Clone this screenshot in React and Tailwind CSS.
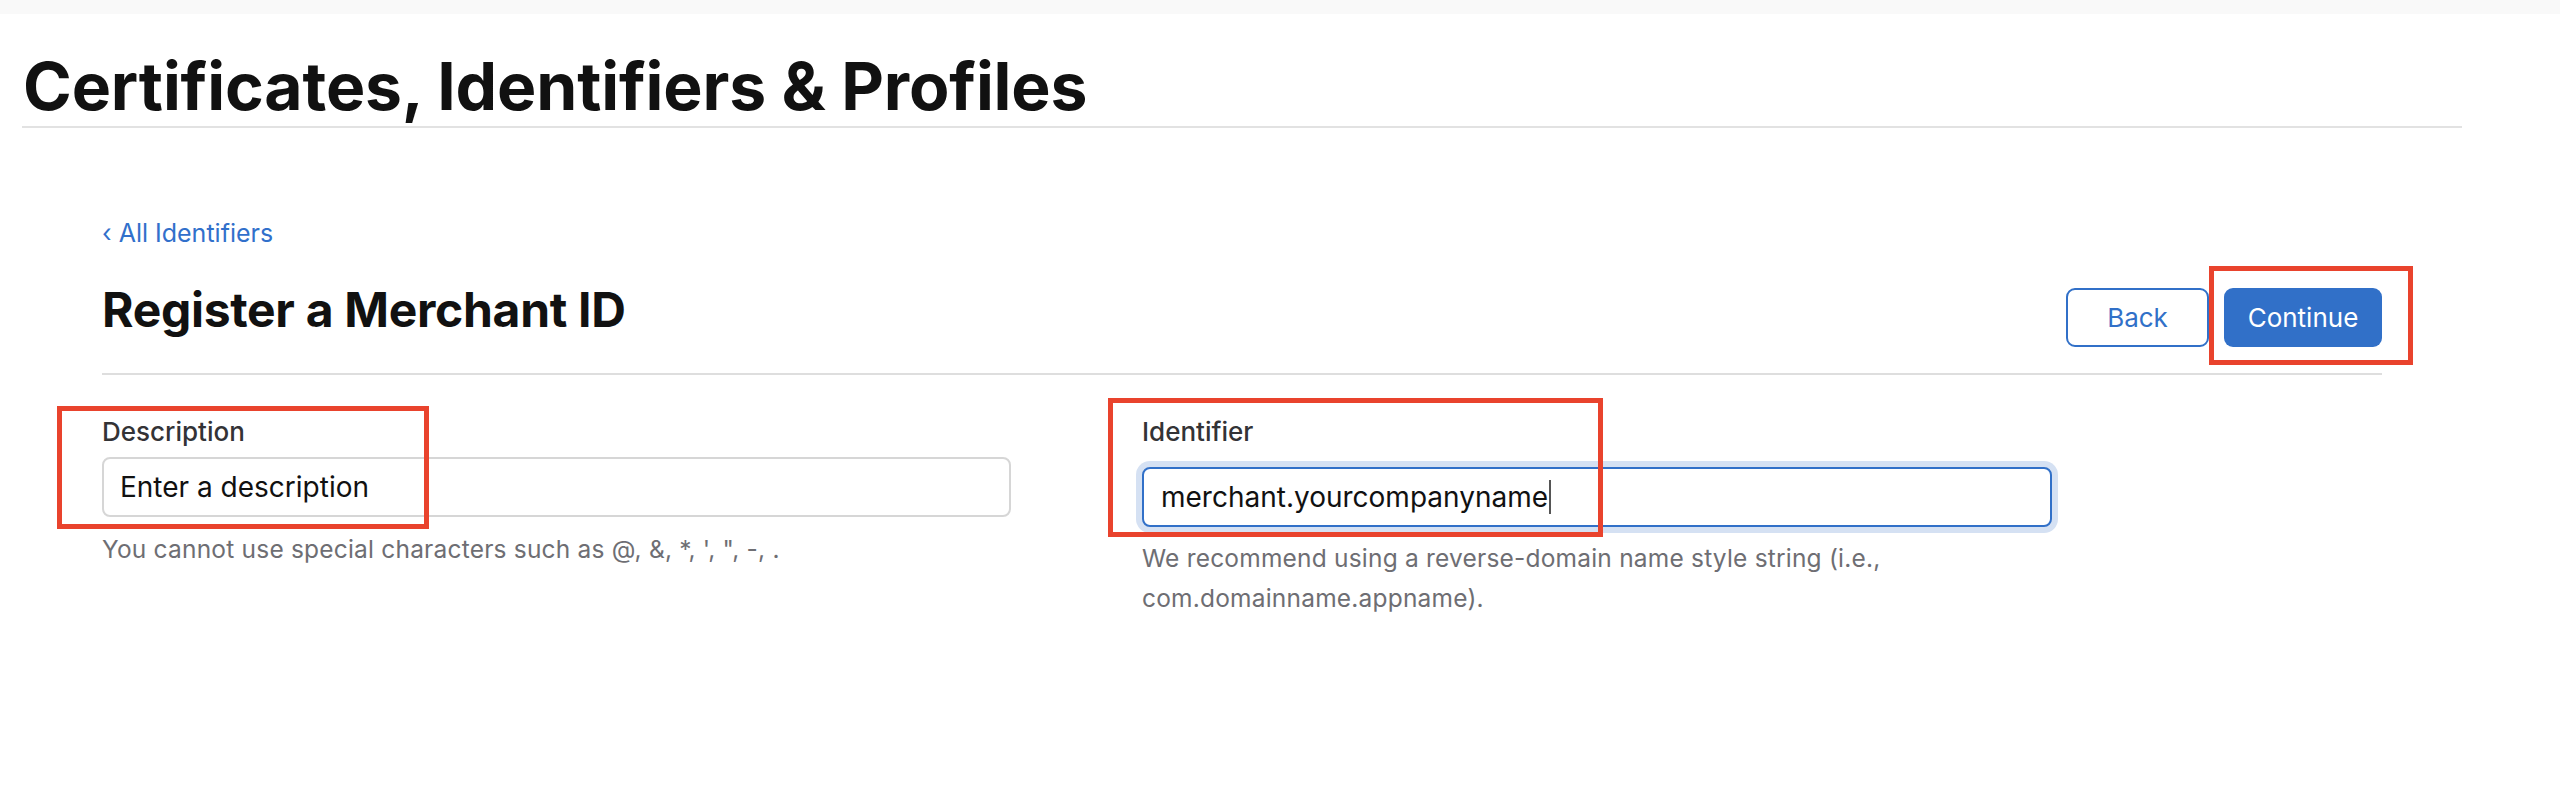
import React from "react";

function Field({ label, children, help, inputGap, helpGap, note }) {
    return (
        <div className="relative w-[910px]">
            <label className="block text-[26px] leading-[26px] font-medium text-[#333336]">{label}</label>
            <div className={inputGap}>{children}</div>
            <p className={`${helpGap} text-[24.5px] leading-[40px] tracking-[0.2px] text-[#6e6e73]`}>{help}</p>
            {note}
        </div>
    );
}

export default function App() {
    return (
        <div className="min-h-screen bg-white font-['Inter','Noto_Sans',sans-serif] text-[#111]">
            {/* top strip */}
            <div className="h-[14px] bg-[#f9f9f9]" />

            {/* page title */}
            <div className="ml-[22px] w-[2440px] border-b-2 border-[#e2e2e2] pt-[39px] pb-[7px]">
                <h1 className="text-[66px] leading-[66px] font-bold tracking-[-0.15px] pl-[1px]">
                    Certificates, Identifiers &amp; Profiles
                </h1>
            </div>

            <main className="mx-[102px] w-[2280px]">
                <a href="#" className="mt-[93px] block text-[25px] leading-[24px] text-[#3170cb]">
                    ‹ All Identifiers
                </a>

                {/* heading row */}
                <div className="mt-[41px] flex items-start justify-between border-b-2 border-[#dedede] pb-[26px]">
                    <h2 className="text-[48px] leading-[48px] font-bold tracking-[-0.3px]">Register a Merchant ID</h2>
                    <div className="mt-[2px] flex gap-[15px]">
                        <button
                            type="button"
                            className="h-[59px] w-[143px] rounded-[9px] border-2 border-[#3170c8] bg-white text-[26px] text-[#3170c8]"
                        >
                            Back
                        </button>
                        <div className="relative">
                            <button
                                type="button"
                                className="h-[59px] w-[158px] rounded-[9px] bg-[#3170c8] text-[26px] text-white"
                            >
                                Continue
                            </button>
                            <div className="pointer-events-none absolute -left-[15px] -top-[22px] h-[99px] w-[204px] border-[5px] border-[#e9432d]" />
                        </div>
                    </div>
                </div>

                {/* fields */}
                <div className="grid grid-cols-[1040px_910px] pt-[44px]">
                    <Field
                        label="Description"
                        inputGap="mt-[12px]"
                        helpGap="mt-[12px]"
                        help={`You cannot use special characters such as @, &, *, ', ", -, .`}
                        note={
                            <div className="pointer-events-none absolute -left-[45px] -top-[13px] h-[123px] w-[372px] border-[5px] border-[#e9432d]" />
                        }
                    >
                        <input
                            type="text"
                            placeholder="Enter a description"
                            className="h-[60px] w-[909px] rounded-[8px] border-2 border-[#d6d6d6] bg-white px-[16px] text-[28px] text-[#111] outline-none placeholder:text-[#111]"
                        />
                    </Field>

                    <Field
                        label="Identifier"
                        inputGap="mt-[22px]"
                        helpGap="mt-[11px]"
                        help="We recommend using a reverse-domain name style string (i.e., com.domainname.appname)."
                        note={
                            <div className="pointer-events-none absolute -left-[34px] -top-[21px] h-[139px] w-[495px] border-[5px] border-[#e9432d]" />
                        }
                    >
                        <div className="flex h-[60px] w-[910px] items-center rounded-[8px] border-2 border-[#3170c8] bg-white px-[17px] text-[28px] text-[#111] shadow-[0_0_0_6px_#d5e1f3]">
                            <span>merchant.yourcompanyname</span>
                            <span className="ml-[1px] h-[34px] w-[2px] bg-[#555]" />
                        </div>
                    </Field>
                </div>
            </main>
        </div>
    );
}
